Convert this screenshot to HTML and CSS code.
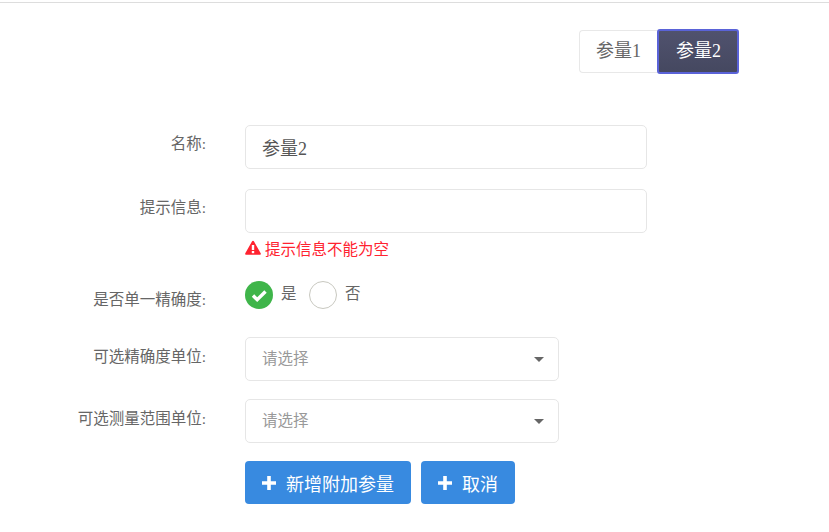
FILE: index.html
```html
<!DOCTYPE html>
<html lang="zh-CN">
<head>
    <meta charset="UTF-8">
    <title>参量</title>
    <link rel="stylesheet" href="styles.css">
</head>
<body>
    <div class="top-line"></div>
    <div class="tabs">
        <div class="tab">参量1</div>
        <div class="tab active">参量2</div>
    </div>
    <div class="form">
        <div class="row">
            <div class="label">名称:</div>
            <div class="field wide">参量2</div>
        </div>
        <div class="row row-error">
            <div class="label">提示信息:</div>
            <div>
                <div class="field wide"></div>
                <div class="error">
                    <svg class="error-icon" viewBox="0 0 16 16"><path d="M8 .8c.4 0 .7.2.9.5l6.800 12c.4.7-.1 1.500-.9 1.500H1.200c-.8 0-1.300-.8-.9-1.500l6.800-12c.2-.3.5-.5.9-.5z" fill="#ff2330"/><rect x="6.800" y="5" width="2.400" height="5" fill="#fff"/><rect x="6.800" y="11" width="2.400" height="2.200" fill="#fff"/></svg>
                    <span>提示信息不能为空</span>
                </div>
            </div>
        </div>
        <div class="row row-radio">
            <div class="label">是否单一精确度:</div>
            <div class="radios">
                <span class="radio checked">
                    <svg viewBox="0 0 28 28"><path d="M8 14.500l4.200 4.200L20.500 10.500" fill="none" stroke="#fff" stroke-width="3.400"/></svg>
                </span>
                <span class="radio-text">是</span>
                <span class="radio"></span>
                <span class="radio-text">否</span>
            </div>
        </div>
        <div class="row row-select">
            <div class="label">可选精确度单位:</div>
            <div class="field select"><span>请选择</span><i class="caret"></i></div>
        </div>
        <div class="row row-select">
            <div class="label">可选测量范围单位:</div>
            <div class="field select"><span>请选择</span><i class="caret"></i></div>
        </div>
        <div class="buttons">
            <div class="btn"><svg class="plus" viewBox="0 0 14 14"><path d="M5.200 0h3.600v5.200H14v3.600H8.800V14H5.200V8.800H0V5.200h5.200z" fill="#fff"/></svg>新增附加参量</div>
            <div class="btn"><svg class="plus" viewBox="0 0 14 14"><path d="M5.200 0h3.600v5.200H14v3.600H8.800V14H5.200V8.800H0V5.200h5.200z" fill="#fff"/></svg>取消</div>
        </div>
    </div>
</body>
</html>
```
FILE: styles.css
```css
body {
    margin: 0;
    background-color: white;
    font-family: "Liberation Serif", "Noto Sans CJK SC", serif;
    color: #555;
}
.top-line {
    height: 1px;
    margin-top: 2px;
    background-color: #ddd;
}
.tabs {
    display: flex;
    justify-content: flex-end;
    align-items: center;
    margin-top: 26px;
    padding-right: 90px;
}
.tab {
    height: 43px;
    line-height: 41px;
    box-sizing: border-box;
    padding: 0 16px;
    font-size: 18px;
    color: #666;
    background-color: white;
    border: 1px solid #e8e8e8;
    border-right: none;
    border-radius: 4px 0 0 4px;
}
.tab.active {
    height: 45px;
    line-height: 41px;
    padding: 0 16px 0 17px;
    color: white;
    background: linear-gradient(#50526e, #454860);
    border: 2px solid #5a63d8;
    border-radius: 3px;
}
.form {
    margin-top: 51px;
}
.row {
    display: flex;
    margin-bottom: 20px;
}
.row-error {
    margin-bottom: 25px;
}
.row-radio {
    margin-bottom: 27px;
}
.row-select {
    margin-bottom: 18px;
}
.label {
    width: 206px;
    margin-right: 39px;
    padding-top: 9px;
    text-align: right;
    font-size: 15.5px;
    line-height: 20px;
    color: #666;
}
.row-select .label {
    padding-top: 10px;
}
.field {
    height: 44px;
    box-sizing: border-box;
    padding: 1px 16px 0;
    line-height: 44px;
    font-size: 18px;
    color: #555;
    background-color: white;
    border: 1px solid #e6e6e6;
    border-radius: 5px;
}
.wide {
    width: 402px;
}
.select {
    position: relative;
    width: 314px;
    padding-top: 0;
    line-height: 42px;
    font-size: 15.5px;
    color: #999;
}
.caret {
    position: absolute;
    right: 14px;
    top: 19px;
    border-top: 5px solid #666;
    border-left: 5px solid transparent;
    border-right: 5px solid transparent;
}
.error {
    display: flex;
    align-items: center;
    gap: 4px;
    height: 17px;
    margin-top: 6px;
    font-size: 15.5px;
    color: #ff2330;
}
.error-icon {
    width: 16px;
    height: 16px;
}
.radios {
    display: flex;
    align-items: flex-start;
}
.radio {
    width: 28px;
    height: 28px;
    box-sizing: border-box;
    border: 1px solid #c8c8c0;
    border-radius: 50%;
}
.radio svg {
    display: block;
}
.radio.checked {
    background-color: #3fb54a;
    border: none;
}
.radio-text {
    margin: 3px 12.5px 0 8px;
    font-size: 15.5px;
    line-height: 20px;
    color: #666;
}
.buttons {
    display: flex;
    gap: 10px;
    margin-left: 245px;
}
.btn {
    display: flex;
    align-items: center;
    height: 43px;
    padding: 0 17px;
    font-size: 18px;
    color: white;
    background-color: #388ae0;
    border-radius: 4px;
}
.plus {
    width: 14px;
    height: 14px;
    margin-right: 10px;
}
```
